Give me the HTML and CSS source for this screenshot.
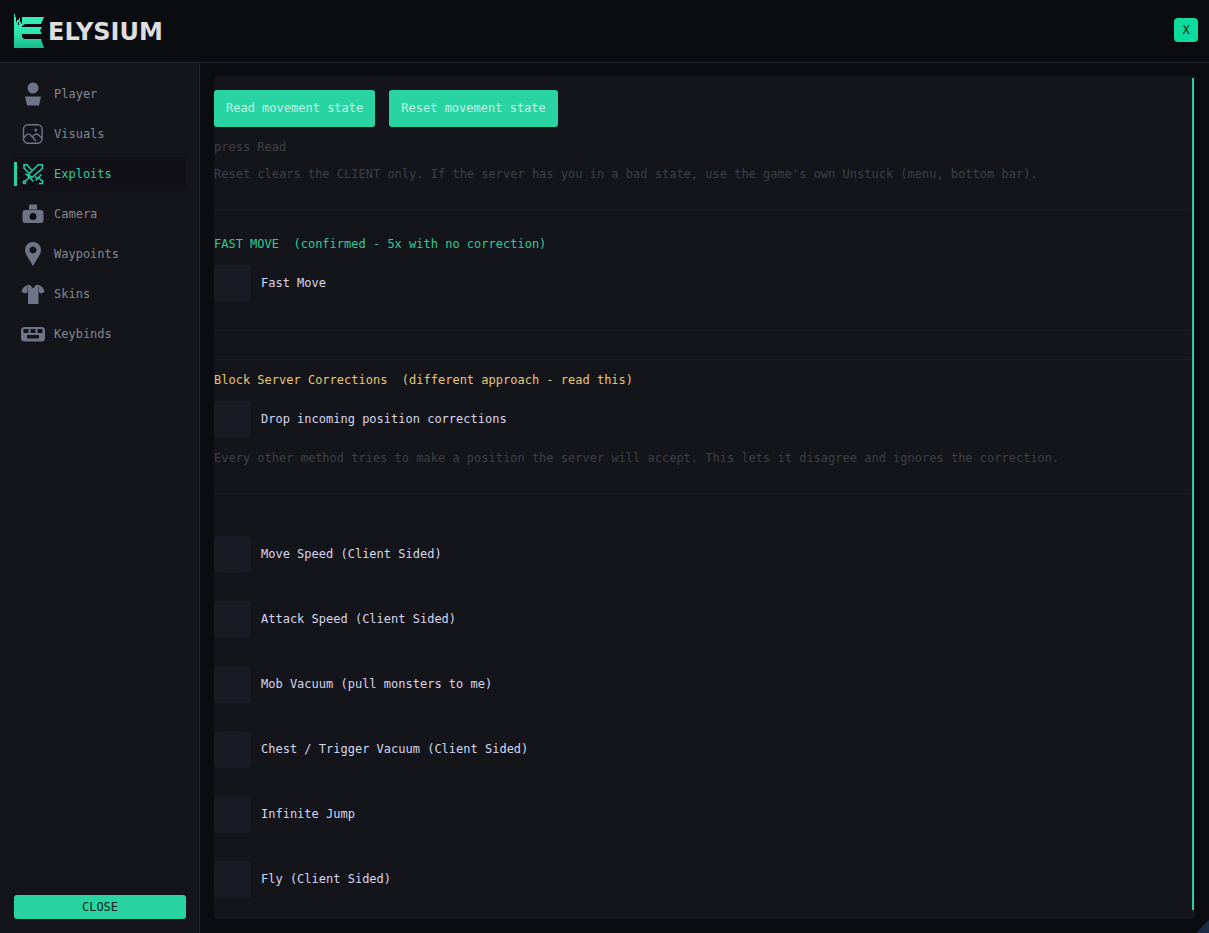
FILE: index.html
```html
<!DOCTYPE html>
<html lang="en">
<head>
<meta charset="utf-8">
<title>Elysium</title>
<link rel="stylesheet" href="styles.css">
</head>
<body>
<div class="window">
  <header class="header">
    <div class="brand">
      <svg class="brand-mark" viewBox="0 0 31 34" aria-hidden="true">
        <defs><linearGradient id="mark" x1="0" y1="0" x2="0" y2="1"><stop offset="0" stop-color="#38edba"/><stop offset="0.5" stop-color="#30e6b0"/><stop offset="1" stop-color="#18bd88"/></linearGradient></defs>
        <path fill="url(#mark)" d="M0 0h1v3h2v3h2V4h1v4h2V3h22l-3 7H11l-3 2v1h20l-2 3.500 2 3.500H8v3l2 2h17l3 9H0z"/>
        <path fill="#0b0c10" d="M2 3h1v5H2zM4 8h1v3H4zM7 7h1v3H7z"/>
      </svg>
      <span class="brand-name">ELYSIUM</span>
    </div>
    <button class="dismiss" type="button" aria-label="Close window">X</button>
  </header>
  <div class="body">
    <aside class="sidebar">
      <nav class="nav">
        <a class="nav-item" href="#player">
          <svg class="icon" viewBox="0 0 24 24" aria-hidden="true"><circle cx="12" cy="6" r="5.5" fill="currentColor"/><path fill="currentColor" d="M4 14.500h16L18 23.500H6z"/></svg>
          Player</a>
        <a class="nav-item" href="#visuals">
          <svg class="icon" viewBox="0 0 24 24" aria-hidden="true"><g fill="none" stroke="currentColor" stroke-width="1.4"><rect x="2.500" y="2.700" width="18.600" height="18.600" rx="4.500"/><path d="M2.500 16L6 12.500q1.500-1.200 3 0L15 19M11 15l3-2.500q1.500-1 3 0l4 3.500"/></g><circle cx="14.800" cy="8" r="1.500" fill="currentColor"/></svg>
          Visuals</a>
        <a class="nav-item nav-item-active" href="#exploits" aria-current="page">
          <svg class="icon" viewBox="0 0 24 24" aria-hidden="true"><g fill="none" stroke="currentColor" stroke-width="1.500"><path d="M21.300 2.700h-4L7.500 12.500l3.500 3L21.300 6.500zM4.500 11.500l8 8M8 15.500L4.500 19"/><path d="M10.500 8L6 2.700H3v3.500l5 5M14 14.500l2.500 2.500M20.500 12.500l-6 6M17.500 15.500l3.500 3.500"/><circle cx="3.500" cy="20.300" r="1.200"/><path d="M21.500 18v3.500H18"/></g></svg>
          Exploits</a>
        <a class="nav-item" href="#camera">
          <svg class="icon" viewBox="0 0 24 24" aria-hidden="true"><path fill="currentColor" d="M9 2.500h6q1 0 1 1V8h3.500q3 0 3 2.500v8q0 2.500-3 2.500h-15q-3 0-3-2.500v-8Q1.500 8 4.500 8H8V3.500q0-1 1-1z"/><path stroke="#14151a" stroke-width=".5" d="M8 7.700h8"/><circle cx="12" cy="14.500" r="3.500" fill="#0e0f14"/></svg>
          Camera</a>
        <a class="nav-item" href="#waypoints">
          <svg class="icon" viewBox="0 0 24 24" aria-hidden="true"><path fill="currentColor" fill-rule="evenodd" d="M12 0a8 8 0 0 1 8 8q0 3-2 6l-6 10-6-10q-2-3-2-6a8 8 0 0 1 8-8zm0 4.500a3.500 3.500 0 1 0 .01 0z"/></svg>
          Waypoints</a>
        <a class="nav-item" href="#skins">
          <svg class="icon" viewBox="0 0 24 24" aria-hidden="true"><path fill="currentColor" d="M6.500 3H9l3 3.500L15 3h3q5 2 5.500 7l-4 1.500-2-2V22H7V9.500l-2 2L.5 10Q1 5 6.500 3z"/><path stroke="#14151a" stroke-width=".4" d="M6.700 4v6M17.500 4v6"/></svg>
          Skins</a>
        <a class="nav-item" href="#keybinds">
          <svg class="icon" viewBox="0 0 24 24" aria-hidden="true"><rect y="5" width="24" height="14.500" rx="3.500" fill="currentColor"/><path fill="#14151a" d="M2.500 7h5v4h-5zM9.500 7h5v4h-5zM16.500 7h5v4h-5zM6 13h12v3.500H6z"/></svg>
          Keybinds</a>
      </nav>
      <button class="close" type="button">CLOSE</button>
    </aside>
    <main class="main">
      <div class="panel">
        <div class="content">
          <div class="actions">
            <button class="action" type="button">Read movement state</button>
            <button class="action" type="button">Reset movement state</button>
          </div>
          <p class="hint">press Read</p>
          <p class="hint">Reset clears the CLIENT only. If the server has you in a bad state, use the game's own Unstuck (menu, bottom bar).</p>
          <hr class="rule">
          <h2 class="title title-green">FAST MOVE  (confirmed - 5x with no correction)</h2>
          <label class="option"><input class="check" type="checkbox">Fast Move</label>
          <hr class="rule">
          <hr class="rule">
          <h2 class="title title-yellow">Block Server Corrections  (different approach - read this)</h2>
          <label class="option"><input class="check" type="checkbox">Drop incoming position corrections</label>
          <p class="hint">Every other method tries to make a position the server will accept. This lets it disagree and ignores the correction.</p>
          <hr class="rule">
          <div class="options">
            <label class="option"><input class="check" type="checkbox">Move Speed (Client Sided)</label>
            <label class="option"><input class="check" type="checkbox">Attack Speed (Client Sided)</label>
            <label class="option"><input class="check" type="checkbox">Mob Vacuum (pull monsters to me)</label>
            <label class="option"><input class="check" type="checkbox">Chest / Trigger Vacuum (Client Sided)</label>
            <label class="option"><input class="check" type="checkbox">Infinite Jump</label>
            <label class="option"><input class="check" type="checkbox">Fly (Client Sided)</label>
          </div>
        </div>
        <div class="scrollbar"></div>
      </div>
    </main>
  </div>
  <div class="grip"></div>
</div>
</body>
</html>
```
FILE: styles.css
```css
* { box-sizing: border-box; }
body {
  margin: 0;
  background: #0b0c10;
  color: #d6d6ee;
  font: 12px/13px "DejaVu Sans Mono", monospace;
}
button { border: 0; padding: 0; font: inherit; cursor: pointer; }
p, h2, hr { margin: 0; }

.window { position: relative; display: flex; flex-direction: column; min-height: 100vh; background: #0b0c10; }
.header {
  display: flex;
  align-items: flex-start;
  justify-content: space-between;
  padding: 14px 11px 14px 14px;
  border-bottom: 1px solid #24242e;
}
.brand { display: flex; align-items: center; gap: 3px; }
.brand-mark { width: 31px; height: 34px; }
.brand-name { color: #dededf; font: 700 24px/36px "DejaVu Sans", sans-serif; height: 34px; }
.dismiss { width: 24px; height: 24px; margin-top: 4px; border-radius: 4px; background: #0ddb9c; color: #0b2a20; }

.body { display: flex; flex: 1; }
.sidebar {
  display: flex;
  flex-direction: column;
  justify-content: space-between;
  width: 200px;
  padding: 14px 13px 14px 14px;
  border-right: 1px solid #24242c;
  background: #14151a;
}
.nav { display: flex; flex-direction: column; gap: 6px; }
.nav-item {
  position: relative;
  display: flex;
  align-items: center;
  gap: 9px;
  height: 34px;
  padding-left: 7px;
  border-radius: 4px;
  color: #858692;
  text-decoration: none;
}
.icon { width: 24px; height: 24px; color: #6d7587; }
.nav-item-active { background: #110f17; color: #29cf9b; }
.nav-item-active .icon { color: #29cf9b; }
.nav-item-active::before {
  content: "";
  position: absolute;
  left: 0;
  top: 5px;
  bottom: 5px;
  width: 3px;
  background: #2ad4a2;
}
.close { height: 24px; border-radius: 3px; background: #2ad4a2; color: #10241d; }

.main { display: flex; flex: 1; min-width: 0; padding: 13px 14px 14px; }
.panel { display: flex; flex: 1; min-width: 0; padding-right: 1px; border-radius: 4px; background: #14151a; }
.content { display: flex; flex: 1; flex-direction: column; gap: 14px; min-width: 0; padding-top: 14px; }
.scrollbar { width: 2px; margin: 2px 0 9px; background: #35c99b; }
.actions { display: flex; gap: 14px; }
.action { height: 37px; padding: 0 12px; border-radius: 3px; background: #2ad4a2; color: #c0f2e5; }
.hint { color: #3e3f47; }
.rule { width: 100%; height: 1px; margin: 14px 0; border: 0; background: #1b1b22; }
.rule + .rule { margin-top: 0; margin-bottom: 0; }
.title { font-size: 12px; font-weight: 400; white-space: pre; }
.title-green { color: #2fc998; }
.title-yellow { color: #e6c678; }
.option { display: flex; align-items: center; gap: 10px; }
.check { appearance: none; width: 37px; height: 37px; margin: 0; border-radius: 4px; background: #1a1a24; }
.check:checked { background: #2ad4a2; }
.options { display: flex; flex-direction: column; gap: 28px; margin-top: 14px; }
.grip {
  position: absolute;
  right: 0;
  bottom: 0;
  width: 13px;
  height: 13px;
  background: #192b45;
  clip-path: polygon(100% 0, 100% 100%, 0 100%);
}
```
